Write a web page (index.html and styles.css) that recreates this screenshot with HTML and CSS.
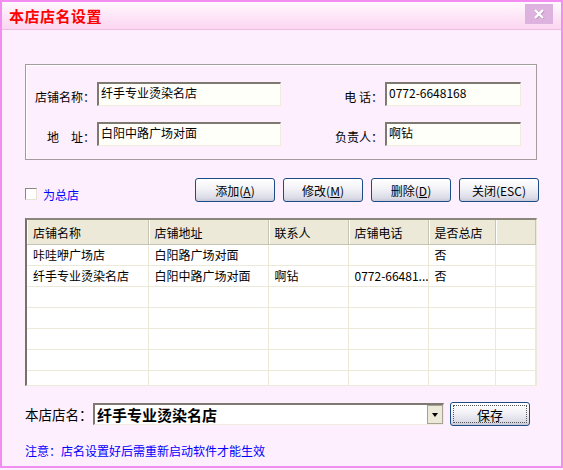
FILE: index.html
```html
<!DOCTYPE html>
<html lang="zh-CN">
<head>
  <meta charset="UTF-8" />
  <title>本店店名设置</title>
  <link rel="stylesheet" href="styles.css">
</head>
<body>
  <div class="window">
    <div class="titlebar">
      <span class="title">本店店名设置</span>
      <button type="button" class="close-btn" title="关闭">
        <svg width="12" height="10" viewBox="0 0 12 10">
          <path d="M2 1 L10 9 M10 1 L2 9" stroke="#b890b8" stroke-width="3" transform="translate(0.5,0.5)" />
          <path d="M2 1 L10 9 M10 1 L2 9" stroke="#ffffff" stroke-width="2.4" />
        </svg>
      </button>
    </div>

    <div class="content">
      <!-- shop info fields -->
      <div class="group-box">
        <div class="field-row">
          <label class="label-left">店铺名称：</label>
          <div class="text-input wide">纤手专业烫染名店</div>
          <label class="label-right">电&nbsp;话：</label>
          <div class="text-input narrow">0772-6648168</div>
        </div>
        <div class="field-row">
          <label class="label-left">地&emsp;址：</label>
          <div class="text-input wide">白阳中路广场对面</div>
          <label class="label-right">负责人：</label>
          <div class="text-input narrow">啊钻</div>
        </div>
      </div>

      <div class="action-row">
        <label class="check-label">
          <span class="checkbox"></span>
          为总店
        </label>
        <div class="buttons">
          <button type="button" class="btn">添加(<u>A</u>)</button>
          <button type="button" class="btn">修改(<u>M</u>)</button>
          <button type="button" class="btn">删除(<u>D</u>)</button>
          <button type="button" class="btn">关闭(ESC)</button>
        </div>
      </div>

      <!-- shop list -->
      <div class="grid">
        <table>
          <colgroup>
            <col style="width:121px">
            <col style="width:120px">
            <col style="width:80px">
            <col style="width:80px">
            <col style="width:67px">
            <col>
          </colgroup>
          <thead>
            <tr>
              <th>店铺名称</th>
              <th>店铺地址</th>
              <th>联系人</th>
              <th>店铺电话</th>
              <th>是否总店</th>
              <th></th>
            </tr>
          </thead>
          <tbody>
            <tr><td>咔哇咿广场店</td><td>白阳路广场对面</td><td></td><td></td><td>否</td><td></td></tr>
            <tr><td>纤手专业烫染名店</td><td>白阳中路广场对面</td><td>啊钻</td><td>0772-66481...</td><td>否</td><td></td></tr>
            <tr><td></td><td></td><td></td><td></td><td></td><td></td></tr>
            <tr><td></td><td></td><td></td><td></td><td></td><td></td></tr>
            <tr><td></td><td></td><td></td><td></td><td></td><td></td></tr>
            <tr><td></td><td></td><td></td><td></td><td></td><td></td></tr>
            <tr><td></td><td></td><td></td><td></td><td></td><td></td></tr>
          </tbody>
        </table>
      </div>

      <div class="shop-row">
        <span class="shop-label">本店店名：</span>
        <div class="combo">
          <span class="combo-text">纤手专业烫染名店</span>
          <span class="combo-arrow"></span>
        </div>
        <button type="button" class="btn save-btn"><span class="focus">保存</span></button>
      </div>

      <p class="note">注意：店名设置好后需重新启动软件才能生效</p>
    </div>
  </div>
</body>
</html>
```

FILE: styles.css
```css
* {
  box-sizing: border-box;
}
body {
  margin: 0;
  font-family: "Noto Sans CJK SC", "DejaVu Sans", sans-serif;
  font-size: 12px;
  color: #000;
  background: #fdeffd;
}
.window {
  width: 563px;
  height: 468px;
  border: 2px solid #f28ef2;
  background: #fdeffd;
  overflow: hidden;
}
.titlebar {
  height: 28px;
  display: flex;
  align-items: center;
  justify-content: space-between;
  padding: 0 8px 0 7px;
  background: linear-gradient(#fff9fe, #fde3f6 60%, #fcd6f1);
  border-bottom: 1px solid #e9bfe2;
}
.title {
  color: #ff0000;
  font-size: 15px;
  font-weight: bold;
  letter-spacing: 0.5px;
}
.close-btn {
  width: 28px;
  height: 20px;
  margin-top: -4px;
  border: none;
  padding: 0;
  background: #deb2de;
  display: flex;
  align-items: center;
  justify-content: center;
}
.content {
  padding: 34px 0 0 23px;
}
.group-box {
  width: 512px;
  height: 96px;
  border: 1px solid #a49c9c;
  box-shadow: inset 1px 1px #ffffff;
  padding-top: 17px;
}
.field-row {
  display: flex;
  align-items: center;
  height: 24px;
  margin-bottom: 16px;
}
.label-left {
  width: 71px;
  text-align: right;
  padding-right: 2px;
  margin-top: 4px;
}
.label-right {
  width: 104px;
  text-align: right;
  padding-right: 2px;
  margin-top: 4px;
}
.text-input {
  height: 24px;
  background: #fffffa;
  border-top: 2px solid #7e7a72;
  border-left: 2px solid #7e7a72;
  border-right: 1px solid #f0ece0;
  border-bottom: 1px solid #f0ece0;
  padding: 0 2px;
  line-height: 17px;
  white-space: nowrap;
}
.text-input.wide {
  width: 184px;
}
.text-input.narrow {
  width: 136px;
}
.action-row {
  display: flex;
  align-items: center;
  width: 514px;
  height: 24px;
  margin-top: 18px;
}
.check-label {
  display: flex;
  align-items: center;
  gap: 6px;
  color: #0000ff;
  margin-top: 8px;
}
.checkbox {
  width: 12px;
  height: 12px;
  background: #ffffff;
  border-top: 1px solid #8a8680;
  border-left: 1px solid #8a8680;
  border-right: 1px solid #e6e2d8;
  border-bottom: 1px solid #e6e2d8;
}
.buttons {
  margin-left: auto;
  display: flex;
  gap: 8px;
}
.btn {
  width: 80px;
  height: 24px;
  padding: 0;
  font-family: "Noto Sans CJK SC", "DejaVu Sans", sans-serif;
  font-size: 12px;
  color: #000;
  border: 1px solid #1c4c86;
  border-radius: 3px;
  background: linear-gradient(#ffffff, #f4f4f8 40%, #dcdce8 85%, #c8c8d8);
}
.btn u {
  text-underline-offset: 1px;
}
.grid {
  width: 512px;
  height: 168px;
  margin-top: 16px;
  overflow: hidden;
  background: #ffffff;
  border-top: 2px solid #8a867c;
  border-left: 2px solid #76726a;
  border-right: 1px solid #ece9d8;
  border-bottom: 1px solid #ece9d8;
}
table {
  width: 100%;
  border-collapse: collapse;
  table-layout: fixed;
}
th {
  height: 24px;
  font-weight: normal;
  text-align: left;
  padding: 2px 6px 0;
  background: #ece9d8;
  border-right: 1px solid #c8c4b4;
  border-bottom: 1px solid #c8c4b4;
  box-shadow: inset 1px 0 #ffffff;
  white-space: nowrap;
}
td {
  height: 21px;
  padding: 0 6px;
  border-right: 1px solid #ece9d8;
  border-bottom: 1px solid #ece9d8;
  white-space: nowrap;
  overflow: hidden;
}
.shop-row {
  display: flex;
  align-items: center;
  height: 24px;
  margin-top: 16px;
}
.shop-label {
  font-size: 13.5px;
  width: 68px;
}
.combo {
  width: 351px;
  height: 22px;
  display: flex;
  align-items: center;
  justify-content: space-between;
  background: #ffffff;
  border-top: 2px solid #7e7a72;
  border-left: 2px solid #7e7a72;
  border-right: 1px solid #f0ece0;
  border-bottom: 1px solid #f0ece0;
  padding-left: 2px;
}
.combo-text {
  font-size: 15px;
  font-weight: bold;
}
.combo-arrow {
  width: 16px;
  height: 19px;
  background: #ece9d8;
  border: 1px solid #a6a294;
  position: relative;
}
.combo-arrow::after {
  content: "";
  position: absolute;
  left: 4px;
  top: 7px;
  border-left: 3.5px solid transparent;
  border-right: 3.5px solid transparent;
  border-top: 4px solid #000;
}
.save-btn {
  margin-left: 6px;
  padding: 2px;
}
.focus {
  display: flex;
  align-items: center;
  justify-content: center;
  height: 100%;
  border: 1px dotted #555;
  font-size: 13px;
}
.note {
  margin: 16px 0 0;
  color: #0000ff;
  font-size: 12px;
}
```
